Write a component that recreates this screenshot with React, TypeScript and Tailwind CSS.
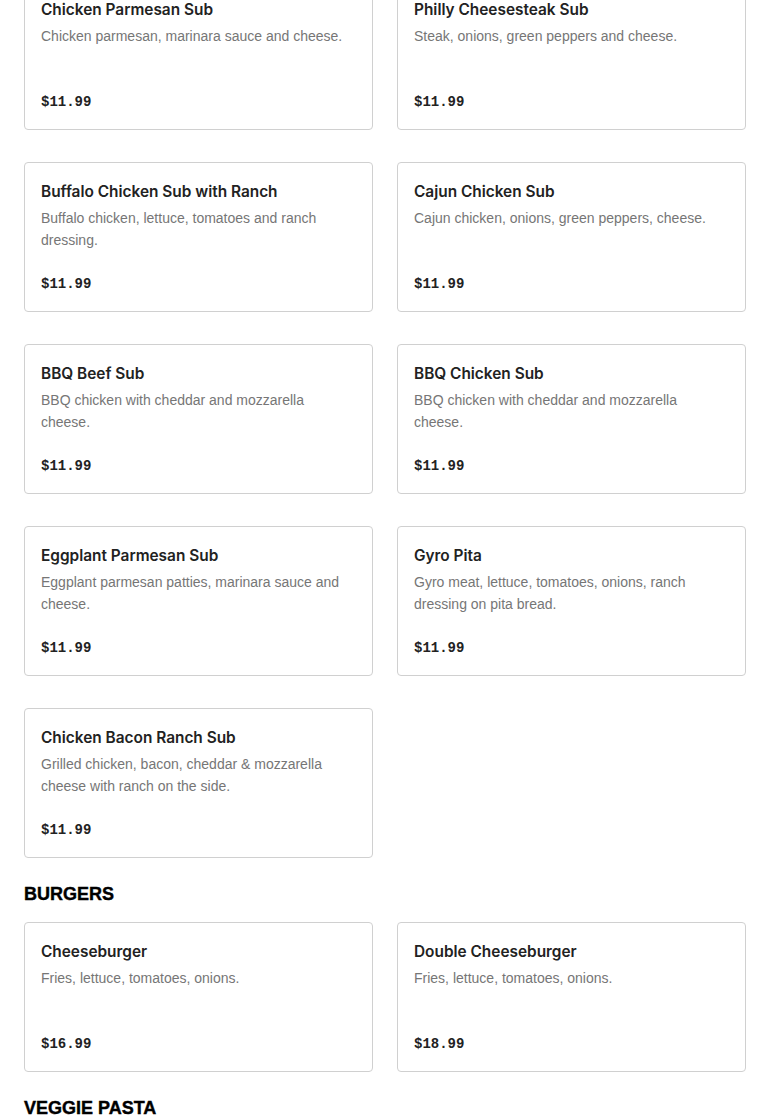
type Item = { name: string; desc: string; price: string };

const subs: Item[] = [
  { name: "Chicken Parmesan Sub", desc: "Chicken parmesan, marinara sauce and cheese.", price: "$11.99" },
  { name: "Philly Cheesesteak Sub", desc: "Steak, onions, green peppers and cheese.", price: "$11.99" },
  { name: "Buffalo Chicken Sub with Ranch", desc: "Buffalo chicken, lettuce, tomatoes and ranch dressing.", price: "$11.99" },
  { name: "Cajun Chicken Sub", desc: "Cajun chicken, onions, green peppers, cheese.", price: "$11.99" },
  { name: "BBQ Beef Sub", desc: "BBQ chicken with cheddar and mozzarella cheese.", price: "$11.99" },
  { name: "BBQ Chicken Sub", desc: "BBQ chicken with cheddar and mozzarella cheese.", price: "$11.99" },
  { name: "Eggplant Parmesan Sub", desc: "Eggplant parmesan patties, marinara sauce and cheese.", price: "$11.99" },
  { name: "Gyro Pita", desc: "Gyro meat, lettuce, tomatoes, onions, ranch dressing on pita bread.", price: "$11.99" },
  { name: "Chicken Bacon Ranch Sub", desc: "Grilled chicken, bacon, cheddar & mozzarella cheese with ranch on the side.", price: "$11.99" },
];

const burgers: Item[] = [
  { name: "Cheeseburger", desc: "Fries, lettuce, tomatoes, onions.", price: "$16.99" },
  { name: "Double Cheeseburger", desc: "Fries, lettuce, tomatoes, onions.", price: "$18.99" },
];

function MenuCard({ item }: { item: Item }) {
  return (
    <div className="flex h-[150px] flex-col rounded border border-[#d0d0d0] bg-white px-4 pb-4 pt-[17px]">
      <h3 className="font-['Inter',sans-serif] text-[15.4px] font-semibold leading-6 text-[#222]">{item.name}</h3>
      <p className="mt-[3px] font-['Liberation_Sans',Arial,sans-serif] text-[14px] leading-[22px] text-[#767676]">
        {item.desc}
      </p>
      <div className="mt-auto font-['Liberation_Mono',monospace] text-[14px] font-bold leading-[22px] text-[#222]">
        {item.price}
      </div>
    </div>
  );
}

function Section({ title, items }: { title?: string; items: Item[] }) {
  return (
    <section>
      {title && (
        <h2 className="mb-4 mt-6 font-['Liberation_Sans',Arial,sans-serif] text-[18px] font-bold leading-6 text-black [-webkit-text-stroke:0.4px_black]">
          {title}
        </h2>
      )}
      <div className="grid grid-cols-2 gap-x-6 gap-y-8">
        {items.map((it) => (
          <MenuCard key={it.name} item={it} />
        ))}
      </div>
    </section>
  );
}

export default function App() {
  return (
    <div className="min-h-screen overflow-hidden bg-white">
      <div className="-mt-5 px-6">
        <Section items={subs} />
        <Section title="BURGERS" items={burgers} />
        <h2 className="mt-6 font-['Liberation_Sans',Arial,sans-serif] text-[18px] font-bold leading-6 text-black [-webkit-text-stroke:0.4px_black]">
          VEGGIE PASTA
        </h2>
      </div>
    </div>
  );
}
